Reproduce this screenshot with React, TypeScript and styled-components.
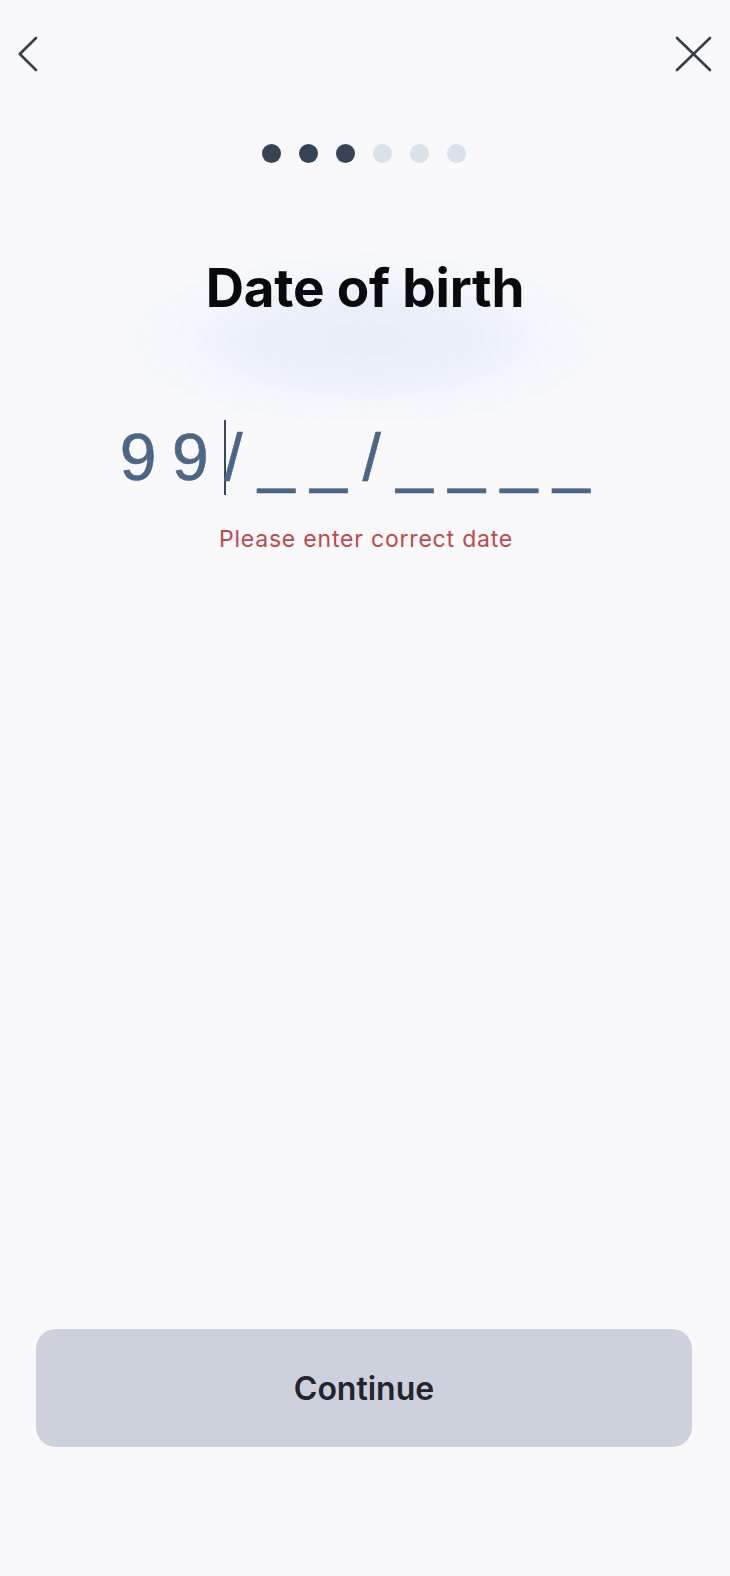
import React from "react";
import styled, { createGlobalStyle } from "styled-components";

const GlobalStyle = createGlobalStyle`
  html, body {
    margin: 0;
    padding: 0;
    background: #f9f9fc;
  }
  body {
    font-family: Inter, "Noto Sans", sans-serif;
    -webkit-font-smoothing: antialiased;
  }
  * { box-sizing: border-box; }
`;

const Page = styled.div`
  min-height: 1576px;
  width: 730px;
  display: flex;
  flex-direction: column;
  align-items: stretch;
  background: #f9f9fc;
`;

const Header = styled.header`
  height: 144px;
  display: flex;
  justify-content: space-between;
  align-items: flex-start;
  padding: 36px 18px 0 18px;
`;

const IconButton = styled.button`
  border: none;
  background: none;
  padding: 0;
  margin: 0;
  display: flex;
  cursor: pointer;
  color: #353f4c;
`;

const Dots = styled.div`
  display: flex;
  justify-content: center;
  gap: 18px;
  height: 19px;
  padding-right: 2px;
`;

const Dot = styled.span<{ $active: boolean }>`
  width: 19px;
  height: 19px;
  border-radius: 50%;
  background: ${(p) => (p.$active ? "#354454" : "#d9e1eb")};
`;

const TitleWrap = styled.div`
  position: relative;
  margin-top: 93px;
  display: flex;
  justify-content: center;

  &::before {
    content: "";
    position: absolute;
    left: 50%;
    top: 0px;
    width: 480px;
    height: 160px;
    transform: translateX(-50%);
    background: radial-gradient(
      ellipse at 50% 52%,
      rgba(230, 237, 247, 1) 0%,
      rgba(231, 238, 247, 0.8) 35%,
      rgba(236, 242, 249, 0.4) 55%,
      rgba(249, 249, 252, 0) 72%
    );
    filter: blur(8px);
  }
`;

const Title = styled.h1`
  position: relative;
  margin: 0;
  font-family: Inter, "Noto Sans", sans-serif;
  font-weight: 700;
  font-size: 53px;
  line-height: 64px;
  color: #0a0a0c;
  letter-spacing: -0.2px;
`;

const DateRow = styled.div`
  margin-top: 97px;
  display: flex;
  justify-content: center;
  align-items: flex-start;
  padding-right: 5px;
  height: 80px;
`;

const DateText = styled.span`
  font-family: "Liberation Sans", Arial, sans-serif;
  font-size: 66px;
  line-height: 80px;
  letter-spacing: 15.5px;
  color: #4b6686;
  white-space: pre;
  -webkit-text-stroke: 0.6px #4b6686;
`;

const Caret = styled.span`
  width: 1.5px;
  height: 75px;
  margin-top: 3px;
  margin-right: -1.5px;
  background: #3a4a5c;
`;

const ErrorText = styled.p`
  margin: 28px 0 0 0;
  text-align: center;
  font-family: Inter, "Noto Sans", sans-serif;
  font-size: 23px;
  line-height: 28px;
  letter-spacing: 0.8px;
  color: #c2474a;
  padding-left: 2px;
`;

const Spacer = styled.div`
  flex: 1;
`;

const ContinueButton = styled.button`
  margin: 0 38px 129px 36px;
  height: 118px;
  border: none;
  border-radius: 20px;
  background: #cdd1dc;
  font-family: Inter, "Noto Sans", sans-serif;
  font-weight: 600;
  font-size: 32px;
  color: #22252d;
  cursor: pointer;
`;

export default function App() {
  const steps = [true, true, true, false, false, false];
  return (
    <>
      <GlobalStyle />
      <Page>
        <Header>
          <IconButton aria-label="Back">
            <svg width="20" height="36" viewBox="0 0 20 36" fill="none">
              <path
                d="M18 2 L1.8 18 L18 34"
                stroke="currentColor"
                strokeWidth="2.6"
                strokeLinecap="round"
                strokeLinejoin="round"
              />
            </svg>
          </IconButton>
          <IconButton aria-label="Close">
            <svg width="38" height="36" viewBox="0 0 38 36" fill="none">
              <path
                d="M3 2 L36 34 M36 2 L3 34"
                stroke="currentColor"
                strokeWidth="2.6"
                strokeLinecap="round"
              />
            </svg>
          </IconButton>
        </Header>
        <Dots>
          {steps.map((a, i) => (
            <Dot key={i} $active={a} />
          ))}
        </Dots>
        <TitleWrap>
          <Title>Date of birth</Title>
        </TitleWrap>
        <DateRow>
          <DateText>99</DateText>
          <Caret />
          <DateText>/__/____</DateText>
        </DateRow>
        <ErrorText>Please enter correct date</ErrorText>
        <Spacer />
        <ContinueButton>Continue</ContinueButton>
      </Page>
    </>
  );
}
